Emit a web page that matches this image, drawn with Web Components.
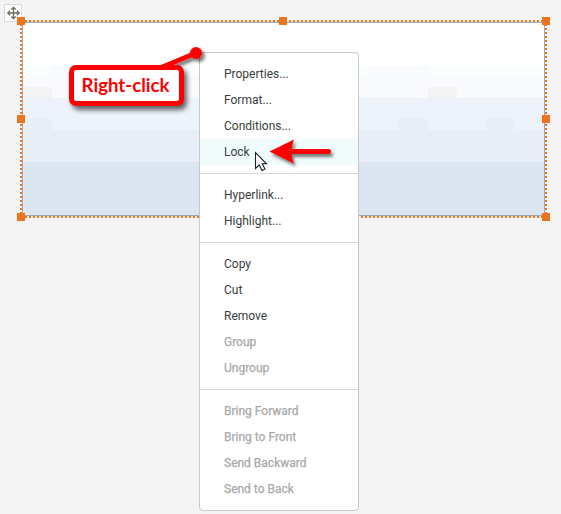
<!DOCTYPE html>
<html lang="en"><head><meta charset="utf-8"><title>Shape menu</title>
<style>html,body{margin:0;height:100%;overflow:hidden}</style></head><body>
<report-canvas></report-canvas>
<script>
class Base extends HTMLElement{
  constructor(){super();this.attachShadow({mode:'open'}).innerHTML=this.view();}
}
customElements.define('move-grip',class extends Base{view(){return `<style>
:host{display:block;box-sizing:border-box;width:18px;height:18px;border:1px solid #d9d9d9;background:#fff}
svg{display:block}</style>
<svg width="16" height="16" viewBox="0 0 16 16" fill="none" stroke="#6f6a62" stroke-width="1.400"><path d="M8.500 2.500v11M3 8h11"/><path d="M6.300 4.600l2.200-2.200 2.200 2.200M6.300 11.400l2.200 2.200 2.200-2.200M5.100 5.800L2.900 8l2.200 2.200M11.900 5.800l2.200 2.200-2.200 2.200"/></svg>`}});
customElements.define('selected-shape',class extends Base{view(){
const h=[[17,17],[279,17],[542,17],[17,115],[542,115],[17,213],[279,213],[542,213]].map(([x,y])=>`<rect x="${x}" y="${y}" width="8" height="8"/>`).join('');
return `<style>:host{display:block}svg{display:block}</style>
<svg width="561" height="230" shape-rendering="crispEdges">
<rect x="22" y="22" width="523" height="194" fill="#a5a7aa"/>
<rect x="23" y="23" width="521" height="192" fill="#fff"/>
<rect x="23" y="66" width="521" height="10" fill="#f8fdfe"/>
<path fill="#f8fafe" d="M23 76h521v22H23zM52 66h87v10H52zM370 66h58v10h-58z"/>
<path fill="#f4f4f5" d="M23 87h29v11H23zM428 87h29v11h-29z"/>
<path fill="#eef3fb" d="M23 98h521v32H23z"/>
<path fill="#e7eef5" d="M23 130h521v32H23zM23 119h29v11H23zM399 119h29v11h-29zM486 119h29v11h-29z"/>
<path fill="#dce6f2" d="M23 162h521v53H23z"/>
<g stroke="#ed731d" stroke-width="2" stroke-dasharray="2 2"><path d="M25 21H542M25 217H542M21 24V214M546 24V214"/></g>
<g fill="#ed731d">${h}</g></svg>`}});
customElements.define('menu-item',class extends Base{view(){return `<style>
:host{display:flex;align-items:center;height:26px;padding-left:24px;color:#393d40}
:host([disabled]){color:#a9a9a9;-webkit-text-stroke:.25px #a9a9a9}
:host([active]){background:#f0fbfb}
</style><slot></slot>`}});
customElements.define('menu-group',class extends Base{view(){return `<style>
:host{display:block;padding:8px 0;border-bottom:1px solid #d8d8d8}
:host(:last-child){border-bottom:0}</style><slot></slot>`}});
customElements.define('context-menu',class extends Base{view(){return `<style>
:host{display:block;box-sizing:border-box;width:160px;height:459px;background:#fff;border:1px solid #c8c8c8;border-radius:4px;font:12px/16px Roboto,sans-serif}
</style><slot></slot>`}});
customElements.define('callout-label',class extends Base{view(){return `<style>
:host{display:flex;box-sizing:border-box;width:115px;height:41px;border:5px solid #f00;border-radius:7px;background:#fff;align-items:center;justify-content:center;font:bold 19.500px/22px Lato,sans-serif;color:#f00;box-shadow:3px 4px 5px #0009}
span{display:block;white-space:nowrap;transform:translate(-.5px,-1px) scaleX(.955)}</style><span><slot></slot></span>`}});
customElements.define('pointer-marks',class extends Base{view(){return `<style>:host{display:block}svg{display:block;overflow:visible}</style>
<svg width="90" height="45"><defs><filter id="s" x="-20%" y="-30%" width="150%" height="190%"><feDropShadow dx="2" dy="3" stdDeviation="1.6" flood-opacity=".5"/></filter></defs>
<g filter="url(#s)" fill="#f00"><path d="M24.500 16.500L49 4.500Q44 16.500 49 28.500Z"/><path d="M43 16.500H83.500" stroke="#f00" stroke-width="5" stroke-linecap="round"/></g>
<path d="M10.500 17.500V33.500L14.200 30L17 35.500L20 34L17.200 28.800H21.500Z" fill="#fff" stroke="#1b1f2c" stroke-width="1.100"/></svg>`}});
customElements.define('callout-stem',class extends Base{view(){return `<style>:host{display:block}svg{display:block;overflow:visible}</style>
<svg width="60" height="40"><defs><filter id="s" x="-20%" y="-30%" width="160%" height="190%"><feDropShadow dx="3" dy="3" stdDeviation="1.800" flood-opacity=".5"/></filter></defs><g filter="url(#s)"><path d="M10 23L46 8" stroke="#f00" stroke-width="5"/><circle cx="46" cy="8" r="6" fill="#f00"/></g></svg>`}});
customElements.define('report-canvas',class extends Base{view(){return `<style>
:host{display:block;position:relative;width:561px;height:514px;overflow:hidden;background:#f4f4f4}
selected-shape,move-grip,context-menu,callout-label,callout-stem,pointer-marks{position:absolute}
selected-shape{left:0;top:0}move-grip{left:4px;top:4px}context-menu{left:199px;top:52px}
callout-stem{left:150px;top:45px}callout-label{left:69px;top:65px}pointer-marks{left:245px;top:135px}
</style>
<move-grip></move-grip><selected-shape></selected-shape>
<context-menu>
<menu-group><menu-item>Properties...</menu-item><menu-item>Format...</menu-item><menu-item>Conditions...</menu-item><menu-item active>Lock</menu-item></menu-group>
<menu-group><menu-item>Hyperlink...</menu-item><menu-item>Highlight...</menu-item></menu-group>
<menu-group><menu-item>Copy</menu-item><menu-item>Cut</menu-item><menu-item>Remove</menu-item><menu-item disabled>Group</menu-item><menu-item disabled>Ungroup</menu-item></menu-group>
<menu-group><menu-item disabled>Bring Forward</menu-item><menu-item disabled>Bring to Front</menu-item><menu-item disabled>Send Backward</menu-item><menu-item disabled>Send to Back</menu-item></menu-group>
</context-menu>
<callout-stem></callout-stem><callout-label>Right-click</callout-label><pointer-marks></pointer-marks>`}});
</script></body></html>
